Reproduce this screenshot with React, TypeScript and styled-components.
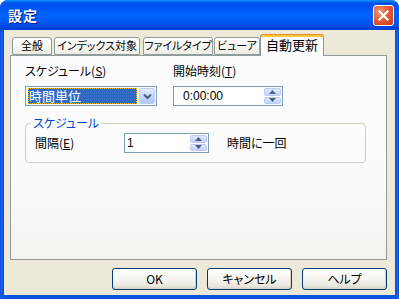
import React from "react";
import styled, { createGlobalStyle } from "styled-components";

const Global = createGlobalStyle`
  html, body { margin: 0; padding: 0; background: #fff; }
  body { width: 399px; height: 299px; overflow: hidden; }
  * { box-sizing: border-box; }
`;

const FONT = `"Noto Sans CJK JP", "Noto Sans", sans-serif`;

const Window = styled.div`
  width: 399px;
  height: 299px;
  display: flex;
  flex-direction: column;
  background: linear-gradient(90deg, #0831d9 0, #166aee 1px, #0855dd 3px, #0855dd 396px, #166aee 398px, #0831d9 399px);
  border-radius: 8px 8px 0 0;
  font-family: ${FONT};
  font-feature-settings: "palt";
  color: #000;
  overflow: hidden;
`;

const TitleBar = styled.div`
  height: 30px;
  flex: none;
  display: flex;
  align-items: center;
  justify-content: space-between;
  padding: 0 5px 0 8px;
  background: linear-gradient(180deg, #0997ff 0, #0053ee 3px, #0050ee 6px, #0066ff 14px, #0058f4 22px, #0046dd 27px, #0041d0 30px);
`;

const Title = styled.span`
  color: #fff;
  font-weight: bold;
  font-size: 14px;
  line-height: 16px;
  letter-spacing: 1px;
  text-shadow: 1px 1px 0 #0a1883;
`;

const CloseButton = styled.div`
  width: 21px;
  height: 21px;
  border: 1px solid #fff;
  border-radius: 3px;
  background: radial-gradient(circle at 30% 30%, #f09878 0, #e35d35 45%, #c5391a 100%);
  display: flex;
  align-items: center;
  justify-content: center;
`;

const Client = styled.div`
  flex: 1;
  margin: 0 4px 4px;
  background: #ece9d8;
  padding: 4px 8px 5px 6px;
  display: flex;
  flex-direction: column;
`;

const TabRow = styled.div`
  height: 21px;
  display: flex;
  align-items: flex-end;
  padding-left: 2px;
  position: relative;
  z-index: 1;
`;

const Tab = styled.div<{ $w: number; $gap: number; $active?: boolean }>`
  width: ${(p) => p.$w}px;
  margin-left: ${(p) => p.$gap}px;
  height: ${(p) => (p.$active ? 22 : 18)}px;
  margin-bottom: ${(p) => (p.$active ? -1 : 0)}px;
  border: 1px solid #919b9c;
  border-bottom: ${(p) => (p.$active ? "none" : "1px solid #919b9c")};
  border-top: ${(p) => (p.$active ? "1px solid #e68b2c" : "1px solid #919b9c")};
  border-radius: 3px 3px 0 0;
  background: ${(p) =>
    p.$active
      ? "linear-gradient(180deg, #ffc73c 0, #ffc73c 2px, #fcfcfe 2px)"
      : "linear-gradient(180deg, #ffffff 0, #f6f5f1 60%, #ecebe5 100%)"};
  font-size: ${(p) => (p.$active ? 13 : 11)}px;
  line-height: ${(p) => (p.$active ? 19 : 15)}px;
  text-align: center;
  white-space: nowrap;
  overflow: hidden;
`;

const Panel = styled.div`
  width: 377px;
  height: 205px;
  border: 1px solid #919b9c;
  background: linear-gradient(180deg, #fcfcfe 0, #fbfbfa 60%, #f4f3ee 100%);
  padding: 8px 0 0 14px;
  display: flex;
  flex-direction: column;
`;

const Row = styled.div`
  display: flex;
  gap: 16px;
`;

const Field = styled.div<{ $w: number }>`
  width: ${(p) => p.$w}px;
  display: flex;
  flex-direction: column;
  gap: 8px;
`;

const Label = styled.div`
  font-size: 12px;
  line-height: 14px;
  height: 14px;
  white-space: nowrap;
`;

const Combo = styled.div`
  height: 20px;
  border: 1px solid #7f9db9;
  background: #fff;
  display: flex;
  align-items: center;
  padding: 1px;
`;

const ComboValue = styled.div`
  flex: 1;
  height: 16px;
  margin: 0 2px 0 1px;
  background: #316ac5;
  color: #fff;
  font-size: 13px;
  line-height: 15px;
  padding-left: 1px;
  outline: 1px dotted #f0c000;
  outline-offset: -1px;
`;

const DropButton = styled.div`
  width: 16px;
  height: 16px;
  border: 1px solid #bccbf0;
  border-radius: 2px;
  background: linear-gradient(180deg, #e2ebfe 0, #c6d6fc 50%, #b4c8f6 100%);
  display: flex;
  align-items: center;
  justify-content: center;
`;

const SpinBox = styled.div<{ $w: number }>`
  width: ${(p) => p.$w}px;
  height: 20px;
  border: 1px solid #7f9db9;
  background: #fff;
  display: flex;
  align-items: center;
  padding: 1px;
`;

const SpinText = styled.div<{ $indent: number }>`
  flex: 1;
  font-family: "Liberation Sans", Arial, sans-serif;
  font-size: 12px;
  line-height: 16px;
  padding-left: ${(p) => p.$indent}px;
`;

const Spinner = styled.div`
  width: 17px;
  height: 16px;
  display: flex;
  flex-direction: column;
  gap: 1px;
`;

const SpinButton = styled.div`
  flex: 1;
  border: 1px solid #bccbf0;
  border-radius: 2px;
  background: linear-gradient(180deg, #dfe8fd 0, #c1d3fb 100%);
  display: flex;
  align-items: center;
  justify-content: center;
`;

const Group = styled.fieldset`
  margin: 10px 0 0 0;
  width: 341px;
  padding: 0 0 9px 0;
  border: 1px solid #d0d0bf;
  border-radius: 4px;
  min-width: 0;
`;

const Legend = styled.legend`
  margin-left: 5px;
  padding: 0 2px;
  color: #0046d5;
  font-size: 12px;
  line-height: 14px;
`;

const GroupRow = styled.div`
  display: flex;
  align-items: center;
  padding: 3px 0 0 9px;
`;

const GroupLabel = styled(Label)<{ $w?: number; $ml?: number }>`
  width: ${(p) => (p.$w ? `${p.$w}px` : "auto")};
  margin-left: ${(p) => p.$ml ?? 0}px;
`;

const Footer = styled.div`
  margin-top: auto;
  display: flex;
  justify-content: flex-end;
  gap: 10px;
`;

const Button = styled.div`
  width: 85px;
  height: 22px;
  border: 1px solid #003c74;
  border-radius: 3px;
  background: linear-gradient(180deg, #ffffff 0, #f5f4ef 50%, #e8e7df 85%, #d6d0c5 100%);
  box-shadow: inset -1px -1px 0 #d6d0c5;
  font-size: 12px;
  line-height: 20px;
  text-align: center;
`;

const Chevron = () => (
  <svg width="9" height="7" viewBox="0 0 9 7">
    <path d="M1 1.5 L4.5 5 L8 1.5" fill="none" stroke="#4d6185" strokeWidth="2" />
  </svg>
);

const Arrow = ({ up }: { up?: boolean }) => (
  <svg width="7" height="4" viewBox="0 0 7 4">
    <path d={up ? "M0 4 L3.5 0 L7 4 Z" : "M0 0 L3.5 4 L7 0 Z"} fill="#4d6185" />
  </svg>
);

export default function App() {
  return (
    <>
      <Global />
      <Window>
        <TitleBar>
          <Title>設定</Title>
          <CloseButton>
            <svg width="11" height="11" viewBox="0 0 11 11">
              <path d="M1.5 1.5 L9.5 9.5 M9.5 1.5 L1.5 9.5" stroke="#fff" strokeWidth="2.2" strokeLinecap="square" />
            </svg>
          </CloseButton>
        </TitleBar>
        <Client>
          <TabRow>
            <Tab $w={40} $gap={0}>全般</Tab>
            <Tab $w={86} $gap={2}>インデックス対象</Tab>
            <Tab $w={70} $gap={3}>ファイルタイプ</Tab>
            <Tab $w={46} $gap={1}>ビューア</Tab>
            <Tab $w={64} $gap={0} $active>自動更新</Tab>
          </TabRow>
          <Panel>
            <Row>
              <Field $w={132}>
                <Label>
                  スケジュール(<u>S</u>)
                </Label>
                <Combo>
                  <ComboValue>時間単位</ComboValue>
                  <DropButton>
                    <Chevron />
                  </DropButton>
                </Combo>
              </Field>
              <Field $w={110}>
                <Label>
                  開始時刻(<u>T</u>)
                </Label>
                <SpinBox $w={110}>
                  <SpinText $indent={8}>0:00:00</SpinText>
                  <Spinner>
                    <SpinButton>
                      <Arrow up />
                    </SpinButton>
                    <SpinButton>
                      <Arrow />
                    </SpinButton>
                  </Spinner>
                </SpinBox>
              </Field>
            </Row>
            <Group>
              <Legend>スケジュール</Legend>
              <GroupRow>
                <GroupLabel $w={89}>
                  間隔(<u>E</u>)
                </GroupLabel>
                <SpinBox $w={85}>
                  <SpinText $indent={1}>1</SpinText>
                  <Spinner>
                    <SpinButton>
                      <Arrow up />
                    </SpinButton>
                    <SpinButton>
                      <Arrow />
                    </SpinButton>
                  </Spinner>
                </SpinBox>
                <GroupLabel $ml={18}>時間に一回</GroupLabel>
              </GroupRow>
            </Group>
          </Panel>
          <Footer>
            <Button>OK</Button>
            <Button>キャンセル</Button>
            <Button>ヘルプ</Button>
          </Footer>
        </Client>
      </Window>
    </>
  );
}
